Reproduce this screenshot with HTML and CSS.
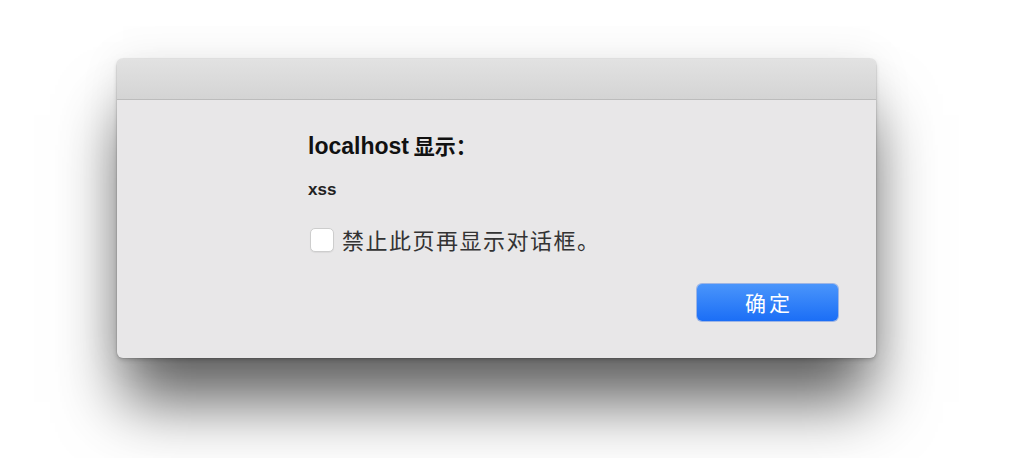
FILE: index.html
```html
<!DOCTYPE html>
<html lang="zh-CN">
<head>
<meta charset="utf-8">
<title>localhost 显示</title>
<link rel="stylesheet" href="styles.css">
</head>
<body>
<div class="dialog">
  <div class="titlebar"></div>
  <div class="content">
    <div class="heading"><span class="host">localhost</span> 显示：</div>
    <div class="message">xss</div>
    <label class="suppress">
      <input type="checkbox" class="box">
      <span>禁止此页再显示对话框。</span>
    </label>
    <div class="actions">
      <button class="ok" type="button">确定</button>
    </div>
  </div>
</div>
</body>
</html>
```
FILE: styles.css
```css
html, body {
  margin: 0;
  padding: 0;
  background: #ffffff;
}

body {
  width: 1010px;
  height: 458px;
  overflow: hidden;
  padding-top: 59px;
  box-sizing: border-box;
  font-family: "Liberation Sans", "Noto Sans CJK SC", sans-serif;
}

.dialog {
  margin-left: 117px;
  width: 759px;
  border-radius: 6px;
  overflow: hidden;
  background: #e8e7e8;
  box-shadow:
    0 0 0 1px rgba(0, 0, 0, 0.06),
    0 2px 4px rgba(0, 0, 0, 0.18),
    0 50px 60px -6px rgba(0, 0, 0, 0.62),
    0 0 40px rgba(0, 0, 0, 0.08);
}

.titlebar {
  height: 40px;
  background: linear-gradient(#e2e2e2, #d4d4d4);
  border-bottom: 1px solid #bcbcbc;
}

.content {
  display: flex;
  flex-direction: column;
  padding: 31px 38px 37px 191px;
}

.heading {
  font-family: "Noto Sans CJK SC", sans-serif;
  font-weight: 700;
  font-size: 21px;
  line-height: 28px;
  color: #111111;
}

.heading .host {
  font-family: "Liberation Sans", sans-serif;
  font-size: 23px;
}

.message {
  margin-top: 20px;
  font-weight: 700;
  font-size: 17px;
  line-height: 20px;
  color: #222222;
}

.suppress {
  margin-top: 27px;
  display: flex;
  align-items: center;
  gap: 8px;
  font-family: "Noto Sans CJK SC", sans-serif;
  font-size: 22px;
  letter-spacing: 1.5px;
  line-height: 25px;
  color: #333333;
}

.box {
  appearance: none;
  -webkit-appearance: none;
  margin: 0 0 0 2px;
  width: 24px;
  height: 24px;
  border-radius: 5px;
  background: #ffffff;
  border: 1px solid #cdcdcd;
  box-shadow: 0 1px 1px rgba(0, 0, 0, 0.06);
}

.actions {
  margin-top: 32px;
  display: flex;
  justify-content: flex-end;
}

.ok {
  width: 141px;
  height: 37px;
  border: none;
  border-radius: 5px;
  background: linear-gradient(#4a95fb, #1b6ef6);
  box-shadow: 0 0 0 1px rgba(20, 90, 220, 0.35);
  color: #ffffff;
  font-family: "Noto Sans CJK SC", sans-serif;
  font-size: 21px;
  letter-spacing: 3px;
  text-indent: 3px;
  line-height: 37px;
  padding: 0;
}
```
